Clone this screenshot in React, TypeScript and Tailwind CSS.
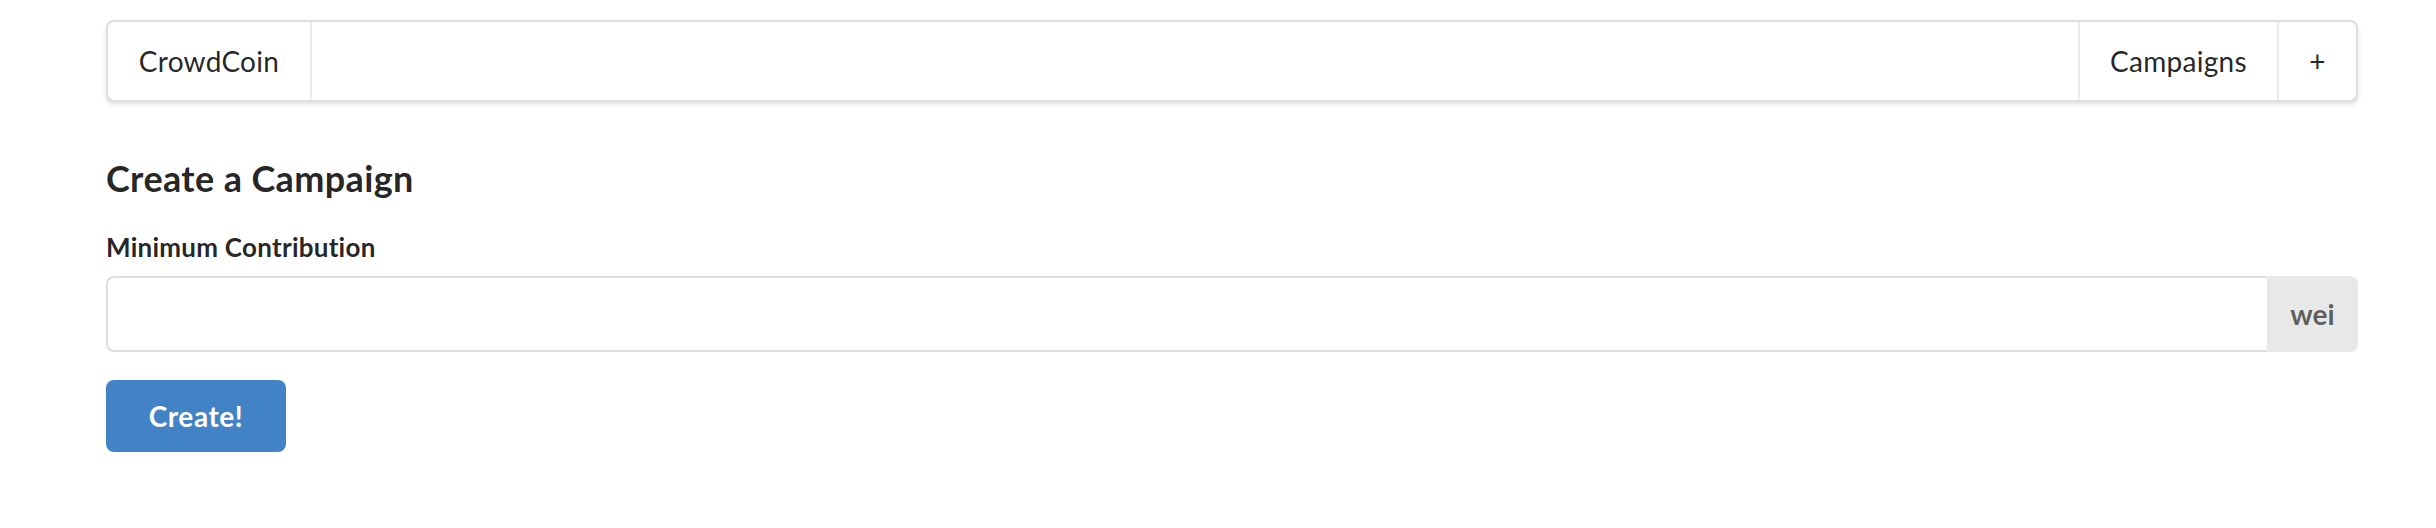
const textDark = 'text-[rgba(0,0,0,0.87)]';

function MenuItem({ children, className = '' }: { children: React.ReactNode; className?: string }) {
  return (
    <div className={`flex items-center justify-center text-[28px] leading-none tracking-[0.01em] ${textDark} ${className}`}>
      {children}
    </div>
  );
}

export default function App() {
  return (
    <div className="min-h-[528px] w-[2436px] bg-white font-['Lato','Liberation_Sans',sans-serif]">
      <div className="ml-[106px] flex w-[2252px] flex-col pt-[20px]">
        <nav className="flex h-[82px] items-stretch rounded-[8px] border-2 border-[#dededf] bg-white shadow-[0_2px_4px_0_rgba(34,36,38,0.15)]">
          <MenuItem className="w-[204px] border-r-2 border-[#ececec]">CrowdCoin</MenuItem>
          <div className="flex-1" />
          <MenuItem className="w-[199px] border-l-2 border-[#ececec]">Campaigns</MenuItem>
          <MenuItem className="w-[79px] border-l-2 border-[#ececec]">+</MenuItem>
        </nav>

        <h3 className={`mt-[53px] text-[36px] font-bold leading-[46px] tracking-[0.01em] ${textDark}`}>Create a Campaign</h3>

        <form className="mt-[28px] flex flex-col" onSubmit={(e) => e.preventDefault()}>
          <label className={`mb-[10px] text-[26px] font-bold leading-[37px] tracking-[0.01em] ${textDark}`}>
            Minimum Contribution
          </label>
          <div className="flex h-[76px] items-stretch">
            <input
              type="text"
              className="min-w-0 flex-1 rounded-l-[8px] border-2 border-r-0 border-[#dededf] bg-white px-[28px] text-[28px] outline-none"
            />
            <div className="flex w-[91px] items-center justify-center rounded-r-[8px] bg-[#e8e8e8] text-[28px] font-bold text-[rgba(0,0,0,0.6)]">
              wei
            </div>
          </div>
          <div className="mt-[28px]">
            <button
              type="submit"
              className="flex h-[72px] w-[180px] items-center justify-center rounded-[8px] bg-[#4183c4] text-[28px] font-bold leading-none tracking-[0.02em] text-white"
            >
              Create!
            </button>
          </div>
        </form>
      </div>
    </div>
  );
}
